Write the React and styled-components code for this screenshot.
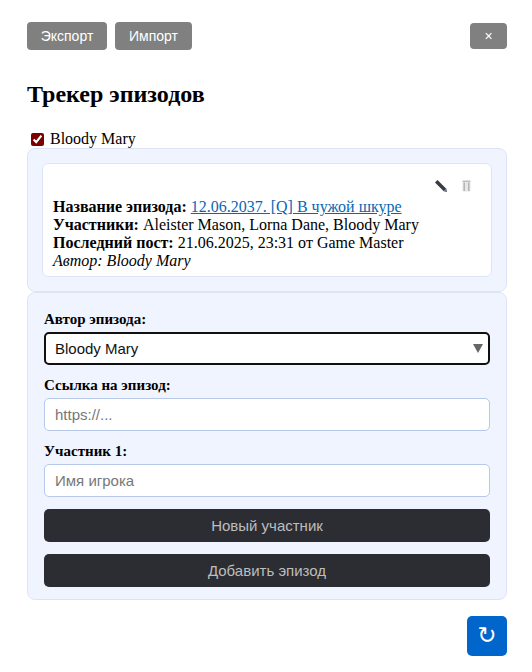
import styled, { createGlobalStyle } from "styled-components";

const GlobalStyle = createGlobalStyle`
  html, body {
    margin: 0;
    padding: 0;
    background: #FFFFFF;
    font-family: "Liberation Serif", serif;
    font-size: 16px;
    color: #000000;
  }
  * { box-sizing: border-box; }
`;

const Page = styled.div`
  width: 532px;
  height: 672px;
  overflow: hidden;
  padding: 22px 25px 0 27px;
  display: flex;
  flex-direction: column;
`;

const TopBar = styled.div`
  display: flex;
  align-items: center;
  justify-content: space-between;
`;

const TopGroup = styled.div`
  display: flex;
  gap: 8px;
`;

const GrayButton = styled.button`
  height: ${(p) => (p.$small ? "26px" : "28px")};
  width: ${(p) => p.$width}px;
  padding: 0;
  border: none;
  border-radius: 4px;
  background: #808080;
  color: #FFFFFF;
  font-family: "Liberation Sans", Arial, sans-serif;
  font-size: 14px;
`;

const Title = styled.h2`
  margin: 31px 0 22px;
  font-size: 24px;
  line-height: 27px;
  font-weight: 700;
`;

const CheckRow = styled.label`
  display: flex;
  align-items: center;
  gap: 6px;
  height: 18px;
  padding-left: 4px;
  line-height: 18px;
`;

const Check = styled.input`
  width: 13px;
  height: 13px;
  margin: 0;
  accent-color: #7B0000;
`;

const Panel = styled.div`
  background: #F0F4FF;
  border: 1px solid #DDE5F5;
  border-radius: 8px;
  padding: ${(p) => p.$padding};
`;

const Card = styled.div`
  height: 114px;
  background: #FFFFFF;
  border: 1px solid #DDE5F5;
  border-radius: 6px;
  padding: 15px 10px 0;
`;

const CardTools = styled.div`
  display: flex;
  justify-content: flex-end;
  align-items: center;
  gap: 15px;
  height: 13px;
  padding-right: 10px;
  margin-bottom: 6px;
`;

const InfoLine = styled.div`
  line-height: 18px;
  font-style: ${(p) => (p.$italic ? "italic" : "normal")};
  white-space: nowrap;
`;

const EpisodeLink = styled.a`
  color: #0A66B2;
  text-decoration: underline;
`;

const FieldLabel = styled.label`
  display: block;
  font-weight: 700;
  font-size: 15px;
  line-height: 17px;
  margin-bottom: 4px;
`;

const Field = styled.div`
  margin-bottom: 12px;
`;

const SelectWrap = styled.div`
  position: relative;
  height: 33px;
`;

const Select = styled.select`
  width: 100%;
  height: 33px;
  appearance: none;
  padding: 0 9px;
  background: #FFFFFF;
  border: 2px solid #101010;
  border-radius: 5px;
  font-family: "Liberation Sans", Arial, sans-serif;
  font-size: 15px;
  color: #111111;
  outline: none;
`;

const SelectArrow = styled.svg`
  position: absolute;
  right: 7px;
  top: 12px;
  width: 10px;
  height: 9px;
  pointer-events: none;
`;

const TextInput = styled.input`
  display: block;
  width: 100%;
  height: 33px;
  padding: 0 10px;
  background: #FFFFFF;
  border: 1px solid #B8C8E8;
  border-radius: 5px;
  font-family: "Liberation Sans", Arial, sans-serif;
  font-size: 15px;
  outline: none;

  &::placeholder {
    color: #777777;
    opacity: 1;
  }
`;

const DarkButton = styled.button`
  display: block;
  width: 100%;
  height: 33px;
  margin-top: ${(p) => p.$top}px;
  padding: 0;
  border: none;
  border-radius: 5px;
  background: #2C2D33;
  color: #BDBDBD;
  font-family: "Liberation Sans", Arial, sans-serif;
  font-size: 15px;
`;

const BottomBar = styled.div`
  display: flex;
  justify-content: flex-end;
  margin-top: 16px;
`;

const RefreshButton = styled.button`
  width: 40px;
  height: 40px;
  padding: 0 0 2px;
  border: none;
  border-radius: 5px;
  background: #0066CC;
  color: #FFFFFF;
  font-family: "DejaVu Sans", sans-serif;
  font-size: 23px;
  line-height: 38px;
`;

const PencilIcon = () => (
  <svg width="12" height="12" viewBox="0 0 12 12">
    <path d="M0 2.5 L2.5 0 L11 8.5 L12 12 L8.5 11 Z" fill="#3A3A40" />
    <path d="M8.5 11 L11 8.5 L12 12 Z" fill="#6F8299" />
  </svg>
);

const TrashIcon = () => (
  <svg width="9" height="12" viewBox="0 0 9 12">
    <rect x="0.5" y="0.5" width="8" height="1.5" fill="#BDBDBD" />
    <rect x="0.5" y="2" width="8" height="9.5" rx="0.8" fill="#E6E7EA" />
    <rect x="1.5" y="2.5" width="1.5" height="8.5" fill="#B4B4B4" />
    <rect x="6" y="2.5" width="1.5" height="8.5" fill="#B4B4B4" />
  </svg>
);

export default function App() {
  return (
    <Page>
      <GlobalStyle />
      <TopBar>
        <TopGroup>
          <GrayButton $width={80}>Экспорт</GrayButton>
          <GrayButton $width={77}>Импорт</GrayButton>
        </TopGroup>
        <GrayButton $small $width={37}>×</GrayButton>
      </TopBar>

      <Title>Трекер эпизодов</Title>

      <CheckRow>
        <Check type="checkbox" defaultChecked />
        Bloody Mary
      </CheckRow>

      <Panel $padding="14px 14px 14px 14px">
        <Card>
          <CardTools>
            <PencilIcon />
            <TrashIcon />
          </CardTools>
          <InfoLine>
            <b>Название эпизода:</b>{" "}
            <EpisodeLink href="#">12.06.2037. [Q] В чужой шкуре</EpisodeLink>
          </InfoLine>
          <InfoLine>
            <b>Участники:</b> Aleister Mason, Lorna Dane, Bloody Mary
          </InfoLine>
          <InfoLine>
            <b>Последний пост:</b> 21.06.2025, 23:31 от Game Master
          </InfoLine>
          <InfoLine $italic>Автор: Bloody Mary</InfoLine>
        </Card>
      </Panel>

      <Panel $padding="18px 16px 12px 16px">
        <Field>
          <FieldLabel>Автор эпизода:</FieldLabel>
          <SelectWrap>
            <Select defaultValue="Bloody Mary">
              <option>Bloody Mary</option>
            </Select>
            <SelectArrow viewBox="0 0 10 9">
              <path d="M0 0 H10 L5 9 Z" fill="#666666" />
            </SelectArrow>
          </SelectWrap>
        </Field>
        <Field>
          <FieldLabel>Ссылка на эпизод:</FieldLabel>
          <TextInput placeholder="https://..." />
        </Field>
        <Field>
          <FieldLabel>Участник 1:</FieldLabel>
          <TextInput placeholder="Имя игрока" />
        </Field>
        <DarkButton $top={0}>Новый участник</DarkButton>
        <DarkButton $top={12}>Добавить эпизод</DarkButton>
      </Panel>

      <BottomBar>
        <RefreshButton>↻</RefreshButton>
      </BottomBar>
    </Page>
  );
}
